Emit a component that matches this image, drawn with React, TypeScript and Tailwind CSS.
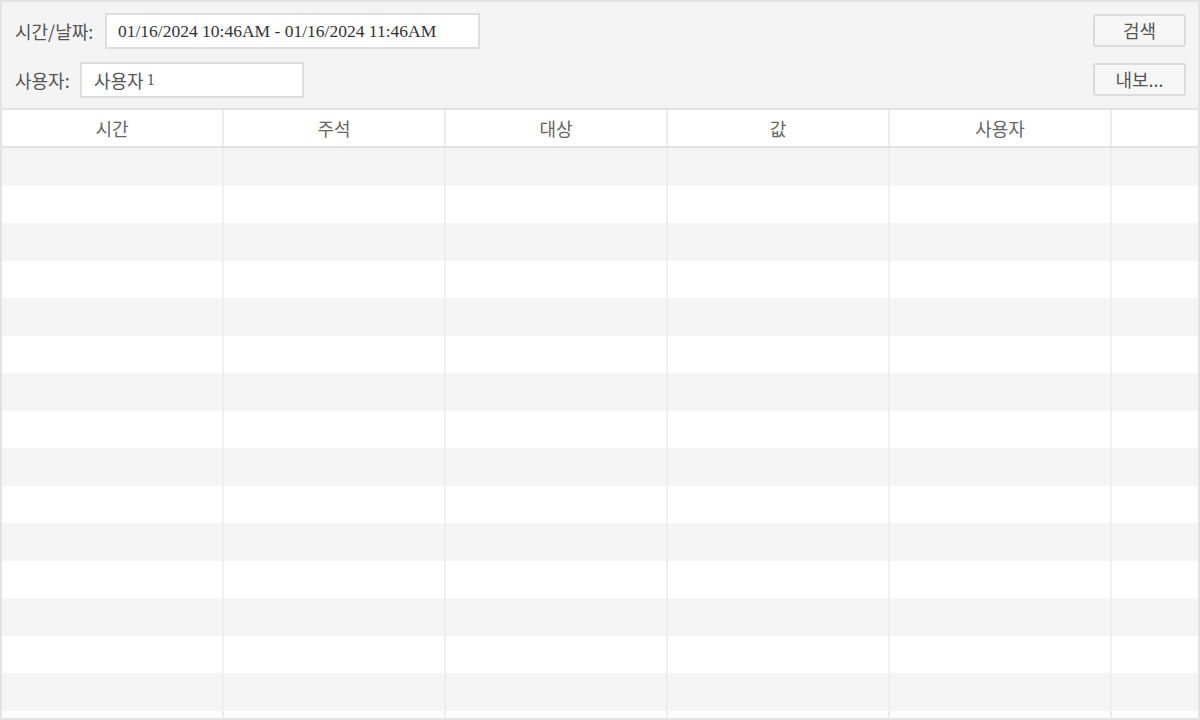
import React from "react";

const columns = ["시간", "주석", "대상", "값", "사용자"];
const rows = Array.from({ length: 15 }, (_, i) => i);

const korean = { fontFamily: '"Noto Sans CJK KR", "Noto Sans", sans-serif' };
const serif = { fontFamily: '"Liberation Serif", "Noto Sans CJK KR", serif' };

export default function App() {
    return (
        <div className="w-[1200px] h-[720px] overflow-hidden bg-white border-2 border-[#e3e3e3] flex flex-col text-[#555]" style={korean}>
            {/* Filter panel */}
            <div className="h-[108px] shrink-0 bg-[#f4f4f4] flex justify-between pl-[13px] pr-[12px] pt-[11px] border-b-2 border-[#e3e3e3]">
                <div className="flex flex-col gap-[13px]">
                    <div className="flex items-center gap-[5px]">
                        <span className="w-[85px] text-[18px] leading-none">시간/날짜:</span>
                        <div className="w-[375px] h-[36px] bg-white border-2 border-[#dedede] flex items-center pl-[11px] text-[17.5px] text-[#333]" style={serif}>
                            01/16/2024 10:46AM - 01/16/2024 11:46AM
                        </div>
                    </div>
                    <div className="flex items-center gap-[5px]">
                        <span className="w-[60px] text-[18px] leading-none">사용자:</span>
                        <div className="w-[224px] h-[36px] bg-white border-2 border-[#dedede] flex items-center pl-[12px] text-[18px] text-[#555]">
                            사용자 <span className="ml-[3px] text-[16px]" style={serif}>1</span>
                        </div>
                    </div>
                </div>
                <div className="flex flex-col gap-[16px] pt-[1px]">
                    <button className="w-[93px] h-[33px] bg-[#f6f6f6] border-2 border-[#dcdcdc] rounded-[3px] text-[18px] text-[#555]">
                        검색
                    </button>
                    <button className="w-[93px] h-[33px] bg-[#f6f6f6] border-2 border-[#dcdcdc] rounded-[3px] text-[18px] text-[#555]">
                        내보...
                    </button>
                </div>
            </div>

            {/* Table */}
            <div className="flex-1 flex flex-col">
                <div className="h-[38px] shrink-0 flex border-b-2 border-[#e3e3e3] bg-white">
                    {columns.map((c) => (
                        <div key={c} className="w-[222px] shrink-0 border-r-2 border-[#ececec] flex items-center justify-center text-[18px] text-[#666]">
                            {c}
                        </div>
                    ))}
                    <div className="flex-1" />
                </div>
                {rows.map((r) => (
                    <div key={r} className={`h-[37.5px] shrink-0 flex ${r % 2 === 0 ? "bg-[#f5f5f5]" : "bg-white"}`}>
                        {columns.map((c) => (
                            <div key={c} className="w-[222px] shrink-0 border-r-2 border-[#efefef]" />
                        ))}
                        <div className="flex-1" />
                    </div>
                ))}
                <div className="flex-1 flex">
                    {columns.map((c) => (
                        <div key={c} className="w-[222px] shrink-0 border-r-2 border-[#efefef]" />
                    ))}
                </div>
            </div>
        </div>
    );
}
